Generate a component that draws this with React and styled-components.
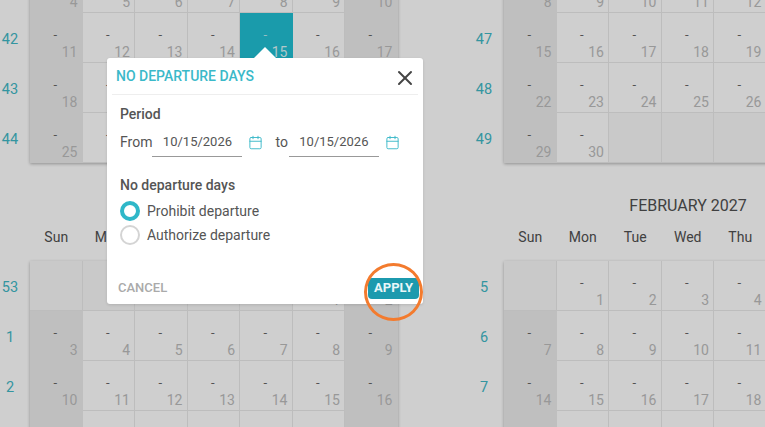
import React from "react";
import styled, { createGlobalStyle } from "styled-components";
import { Calendar, X } from "lucide-react";

const GlobalStyle = createGlobalStyle`
  html, body {
    margin: 0;
    padding: 0;
    background: #fff;
    font-family: Roboto, "Liberation Sans", sans-serif;
  }
`;

const Page = styled.div`
  position: relative;
  width: 765px;
  height: 427px;
  overflow: hidden;
`;

const Months = styled.div`
  display: grid;
  grid-template-columns: 397px 368px;
  row-gap: 33px;
  margin-top: -152px;
`;

const Month = styled.section`
  display: grid;
  grid-template-columns: ${(p) => (p.$right ? "107px 368px" : "30px 368px")};
  grid-template-rows: 65px auto;
  width: ${(p) => (p.$right ? "475px" : "398px")};
`;

const Head = styled.div`
  grid-column: 2;
  display: flex;
  flex-direction: column;
`;

const MonthTitle = styled.h2`
  margin: 0;
  height: 20px;
  line-height: 20px;
  font-size: 16px;
  font-weight: 400;
  text-align: center;
  color: #4f4f4f;
`;

const WeekDays = styled.div`
  display: grid;
  grid-template-columns: repeat(7, 52.5px);
  margin-top: 11px;
`;

const WeekDay = styled.span`
  text-align: center;
  font-size: 14px;
  line-height: 20px;
  color: #505050;
`;

const WeekNumbers = styled.div`
  grid-column: 1;
  display: grid;
  grid-auto-rows: 50px;
  justify-items: ${(p) => (p.$right ? "end" : "start")};
`;

const WeekNumber = styled.span`
  width: 20px;
  margin-right: ${(p) => (p.$right ? "10px" : "0")};
  text-align: center;
  font-size: 14.5px;
  line-height: 53px;
  color: #3fb8c6;
`;

const Grid = styled.div`
  grid-column: 2;
  display: grid;
  grid-template-columns: repeat(7, 52.5px);
  grid-auto-rows: 50px;
  box-shadow: 0 1px 3px rgba(0, 0, 0, 0.3);
`;

const Cell = styled.div`
  position: relative;
  box-sizing: border-box;
  border-right: 1px solid #e9e9e9;
  border-bottom: 1px solid #e9e9e9;
  background: ${(p) =>
    p.$selected ? "#21bfd3" : p.$empty ? "#f8f8f8" : p.$weekend ? "#ececec" : "#ffffff"};
  border-color: ${(p) => (p.$weekend && !p.$empty ? "#ececec" : p.$selected ? "#21bfd3" : "#e9e9e9")};
  display: flex;
  flex-direction: column;
  padding: 14px 4px 0 0;
`;

const Price = styled.span`
  align-self: center;
  margin-left: 3px;
  font-size: 13px;
  line-height: 15px;
  color: ${(p) => (p.$selected ? "rgba(255,255,255,0.7)" : "#666")};
`;

const DayNumber = styled.span`
  align-self: flex-end;
  margin-top: 2px;
  font-size: 14px;
  line-height: 16px;
  color: ${(p) => (p.$selected ? "rgba(255,255,255,0.85)" : "#bcbcbc")};
`;

const Overlay = styled.div`
  position: absolute;
  inset: 0;
  background: rgba(0, 0, 0, 0.19);
`;

const Modal = styled.div`
  position: absolute;
  left: 107px;
  top: 58px;
  width: 316px;
  height: 246px;
  box-sizing: border-box;
  padding: 0 5px;
  display: flex;
  flex-direction: column;
  background: #fff;
  border-radius: 3px;
  box-shadow: 0 1px 3px rgba(0, 0, 0, 0.12);
  color: #555;

  &::before {
    content: "";
    position: absolute;
    left: 147px;
    top: -11px;
    border-left: 11px solid transparent;
    border-right: 11px solid transparent;
    border-bottom: 11px solid #fff;
  }
`;

const ModalHeader = styled.header`
  display: flex;
  justify-content: space-between;
  align-items: center;
  height: 36px;
  flex: none;
  padding: 0 1px 0 4px;
  border-bottom: 1px solid #eee;
`;

const ModalTitle = styled.h3`
  margin: 0 0 1px;
  font-size: 14px;
  font-weight: 500;
  color: #3bb9c9;
`;

const CloseButton = styled.button`
  display: flex;
  padding: 0;
  margin-top: 4px;
  border: 0;
  background: none;
  color: #444;
`;

const ModalBody = styled.div`
  flex: 1;
  padding: 11px 8px 0;
`;

const SectionLabel = styled.div`
  font-size: 14px;
  font-weight: 500;
  line-height: 16px;
  color: #555;
`;

const DateRow = styled.div`
  display: flex;
  align-items: center;
  margin-top: 2px;
  margin-bottom: 17px;
  height: 36px;
  font-size: 14px;
`;

const DateField = styled.div`
  flex: none;
  width: 90px;
  height: 33px;
  margin-left: ${(p) => p.$gap}px;
  align-self: flex-start;
  box-sizing: border-box;
  border-bottom: 1px solid #999;
  font-size: 13px;
  line-height: 35px;
  text-align: center;
  color: #555;
`;

const DateIcon = styled(Calendar)`
  color: #3bb9c9;
  margin-left: 6px;
  margin-right: 12px;
  flex: none;
`;

const RadioRow = styled.label`
  display: flex;
  align-items: center;
  gap: 7px;
  height: 24px;
  font-size: 14px;
  color: #555;
`;

const RadioMark = styled.span`
  box-sizing: border-box;
  width: 20px;
  height: 20px;
  border-radius: 50%;
  border: ${(p) => (p.$on ? "4px solid #2fb7c8" : "2px solid #d4d4d4")};
  background: #fff;
`;

const RadioGroup = styled.div`
  margin-top: 6px;
`;

const ModalFooter = styled.footer`
  display: flex;
  justify-content: space-between;
  align-items: center;
  padding: 0 0 5px 6px;
  margin-right: -1px;
  position: relative;
`;

const CancelButton = styled.button`
  padding: 0 0 2px;
  border: 0;
  background: none;
  font: 500 13px Roboto, sans-serif;
  color: #aaa;
`;

const ApplyButton = styled.button`
  width: 51px;
  height: 21px;
  padding: 0 0 2px;
  border: 0;
  border-radius: 4px;
  background: #1c9aae;
  color: #e8f6f8;
  font: 700 13px Roboto, sans-serif;
`;

const Highlight = styled.span`
  position: absolute;
  right: -4px;
  top: -15px;
  width: 59px;
  height: 58px;
  box-sizing: border-box;
  border: 3px solid #f37b2e;
  border-radius: 50%;
`;

const DAY_NAMES = ["Sun", "Mon", "Tue", "Wed", "Thu", "Fri", "Sat"];
const MONTHS = [
  { title: "OCTOBER 2026", year: 2026, month: 9, weeks: [40, 41, 42, 43, 44] },
  { title: "NOVEMBER 2026", year: 2026, month: 10, weeks: [45, 46, 47, 48, 49], right: true },
  { title: "JANUARY 2027", year: 2027, month: 0, weeks: [53, 1, 2, 3, 4, 5] },
  { title: "FEBRUARY 2027", year: 2027, month: 1, weeks: [5, 6, 7, 8, 9], right: true },
];

const buildCells = (year, month, rows) => {
  const offset = new Date(year, month, 1).getDay();
  const total = new Date(year, month + 1, 0).getDate();
  return Array.from({ length: rows * 7 }, (_, i) => {
    const day = i - offset + 1;
    return day >= 1 && day <= total ? day : null;
  });
};

const MonthBlock = ({ title, year, month, weeks, right }) => (
  <Month $right={right}>
    <Head>
      <MonthTitle>{title}</MonthTitle>
      <WeekDays>
        {DAY_NAMES.map((name) => (
          <WeekDay key={name}>{name}</WeekDay>
        ))}
      </WeekDays>
    </Head>
    <WeekNumbers $right={right}>
      {weeks.map((week) => (
        <WeekNumber key={week} $right={right}>
          {week}
        </WeekNumber>
      ))}
    </WeekNumbers>
    <Grid>
      {buildCells(year, month, weeks.length).map((day, i) => {
        const selected = year === 2026 && month === 9 && day === 15;
        const weekend = i % 7 === 0 || i % 7 === 6;
        if (day === null) return <Cell key={i} $empty />;
        return (
          <Cell key={i} $weekend={weekend} $selected={selected}>
            <Price $selected={selected}>-</Price>
            <DayNumber $selected={selected}>{day}</DayNumber>
          </Cell>
        );
      })}
    </Grid>
  </Month>
);

const App = () => (
  <Page>
    <GlobalStyle />
    <Months>
      {MONTHS.map((m) => (
        <MonthBlock key={m.title} {...m} />
      ))}
    </Months>
    <Overlay />
    <Modal>
      <ModalHeader>
        <ModalTitle>NO DEPARTURE DAYS</ModalTitle>
        <CloseButton aria-label="Close">
          <X size={24} strokeWidth={2} />
        </CloseButton>
      </ModalHeader>
      <ModalBody>
        <SectionLabel>Period</SectionLabel>
        <DateRow>
          From
          <DateField $gap={0}>10/15/2026</DateField>
          <DateIcon size={15} strokeWidth={1.5} />
          to
          <DateField $gap={1}>10/15/2026</DateField>
          <DateIcon size={15} strokeWidth={1.5} />
        </DateRow>
        <SectionLabel>No departure days</SectionLabel>
        <RadioGroup>
          <RadioRow>
            <RadioMark $on />
            Prohibit departure
          </RadioRow>
          <RadioRow>
            <RadioMark />
            Authorize departure
          </RadioRow>
        </RadioGroup>
      </ModalBody>
      <ModalFooter>
        <CancelButton>CANCEL</CancelButton>
        <ApplyButton>APPLY</ApplyButton>
        <Highlight />
      </ModalFooter>
    </Modal>
  </Page>
);

export default App;
